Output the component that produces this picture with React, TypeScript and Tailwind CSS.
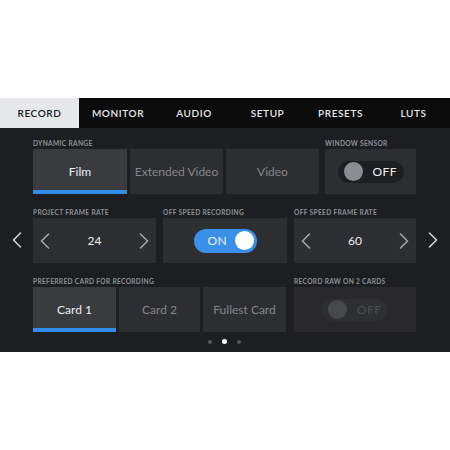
import React from "react";

const font = { fontFamily: "Lato, 'Open Sans', sans-serif" };

function Chev({ dir, className }: { dir: "l" | "r"; className?: string }) {
  return (
    <svg width="10" height="16" viewBox="0 0 10 16" className={className} fill="none">
      <path
        d={dir === "l" ? "M8.5 1 L1.5 8 L8.5 15" : "M1.5 1 L8.5 8 L1.5 15"}
        stroke="currentColor"
        strokeWidth="1.6"
        strokeLinecap="round"
        strokeLinejoin="round"
      />
    </svg>
  );
}

function Label({ children }: { children: React.ReactNode }) {
  return (
    <div className="h-[9px] mb-[1px] flex items-center text-[6.6px] font-bold tracking-[0.05em] text-[#8e9095] leading-none whitespace-nowrap">
      {children}
    </div>
  );
}

function Seg({ label, active, w }: { label: string; active?: boolean; w: string }) {
  return (
    <div
      className={`${w} h-[45px] flex flex-col ${active ? "bg-[#3a3b3f]" : "bg-[#2d2e32]"}`}
    >
      <div className={`flex-1 flex items-center justify-center pt-[5px] text-[12px] ${active ? "text-[#eeeeef]" : "text-[#85868a]"}`}>
        {label}
      </div>
      <div className={`h-[4px] ${active ? "bg-[#2f8ce8]" : ""}`} />
    </div>
  );
}

function Stepper({ value, w }: { value: string; w: string }) {
  return (
    <div className={`${w} h-[45px] bg-[#2d2e32] flex items-center justify-between px-[7px] text-[#a3a4a8]`}>
      <Chev dir="l" />
      <span className="text-[12px] text-[#eeeeef]">{value}</span>
      <Chev dir="r" />
    </div>
  );
}

function OffToggle({ dim }: { dim?: boolean }) {
  return (
    <div className={`w-[66px] h-[22px] rounded-full flex items-center pl-[6px] gap-[10px] ${dim ? "bg-[#2e2f33]" : "bg-[#1d1e22]"}`}>
      <div className={`w-[19px] h-[19px] rounded-full ${dim ? "bg-[#47484c]" : "bg-[#8b8d92]"}`} />
      <span className={`text-[12px] tracking-[0.04em] ${dim ? "text-[#4d4e52]" : "text-[#eeeeef]"}`}>OFF</span>
    </div>
  );
}

export default function App() {
  const tabs: [string, string][] = [
    ["RECORD", "w-[79px]"],
    ["MONITOR", "w-[78px]"],
    ["AUDIO", "w-[74px]"],
    ["SETUP", "w-[73px]"],
    ["PRESETS", "w-[73px]"],
    ["LUTS", "flex-1"],
  ];
  return (
    <div className="w-[450px] h-[450px] bg-white pt-[98px]" style={font}>
      <div className="h-[254px] bg-[#1d1e22] flex flex-col">
        <div className="h-[30px] bg-[#0b0b0c] flex">
          {tabs.map(([t, w], i) => (
            <div
              key={t}
              className={`${w} flex items-center justify-center text-[10px] font-semibold tracking-[0.06em] ${i === 0 ? "bg-[#e6e8eb] text-[#1a1b1e]" : "text-[#e8e8ea]"}`}
            >
              {t}
            </div>
          ))}
        </div>
        <div className="flex-1 flex">
          <div className="w-[33px] flex items-center justify-center text-[#d4d4d6]">
            <Chev dir="l" />
          </div>
          <div className="w-[383px] flex flex-col pt-[11px]">
            {/* Row 1 */}
            <div className="flex">
              <div>
                <Label>DYNAMIC RANGE</Label>
                <div className="flex gap-[3px]">
                  <Seg label="Film" active w="w-[94px]" />
                  <Seg label="Extended Video" w="w-[93px]" />
                  <Seg label="Video" w="w-[93px]" />
                </div>
              </div>
              <div className="ml-[6px]">
                <Label>WINDOW SENSOR</Label>
                <div className="w-[91px] h-[45px] bg-[#2d2e32] flex items-center justify-center">
                  <OffToggle />
                </div>
              </div>
            </div>
            {/* Row 2 */}
            <div className="flex gap-[7px] mt-[14px]">
              <div>
                <Label>PROJECT FRAME RATE</Label>
                <Stepper value="24" w="w-[123px]" />
              </div>
              <div>
                <Label>OFF SPEED RECORDING</Label>
                <div className="w-[124px] h-[45px] bg-[#2d2e32] flex items-center justify-center">
                  <div className="w-[63px] h-[24px] rounded-full bg-[#3a8fe9] flex items-center justify-between pl-[14px] pr-[3px]">
                    <span className="text-[12px] tracking-[0.04em] text-[#e9f2fc]">ON</span>
                    <div className="w-[19px] h-[19px] rounded-full bg-white" />
                  </div>
                </div>
              </div>
              <div>
                <Label>OFF SPEED FRAME RATE</Label>
                <Stepper value="60" w="w-[122px]" />
              </div>
            </div>
            {/* Row 3 */}
            <div className="flex mt-[14px]">
              <div>
                <Label>PREFERRED CARD FOR RECORDING</Label>
                <div className="flex gap-[3px]">
                  <Seg label="Card 1" active w="w-[83px]" />
                  <Seg label="Card 2" w="w-[81px]" />
                  <Seg label="Fullest Card" w="w-[83px]" />
                </div>
              </div>
              <div className="ml-[8px]">
                <Label>RECORD RAW ON 2 CARDS</Label>
                <div className="w-[122px] h-[45px] bg-[#29292d] flex items-center justify-center">
                  <OffToggle dim />
                </div>
              </div>
            </div>
            <div className="flex-1 flex items-center justify-center gap-[10px] pb-[1px]">
              <div className="w-[4px] h-[4px] rounded-full bg-[#55565a]" />
              <div className="w-[5px] h-[5px] rounded-full bg-white" />
              <div className="w-[4px] h-[4px] rounded-full bg-[#55565a]" />
            </div>
          </div>
          <div className="flex-1 flex items-center justify-center text-[#d4d4d6]">
            <Chev dir="r" />
          </div>
        </div>
      </div>
    </div>
  );
}
